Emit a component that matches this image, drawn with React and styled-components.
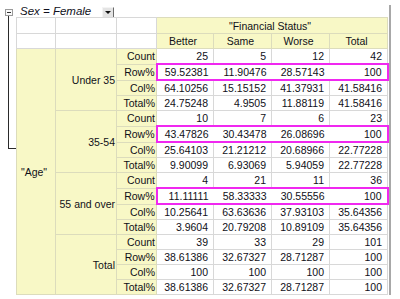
import React from "react";
import styled, { createGlobalStyle } from "styled-components";

const GlobalStyle = createGlobalStyle`
  html, body {
    margin: 0;
    padding: 0;
    background: #ffffff;
  }
  body {
    font-family: "Liberation Sans", Arial, sans-serif;
    color: #101018;
  }
`;

const Frame = styled.div`
  display: flex;
  width: 388px;
  margin-top: 5px;
  padding-right: 1px;
  border-right: 2px solid #a8a8a8;
`;

const Gutter = styled.div`
  width: 16px;
  flex: none;
  display: flex;
  flex-direction: column;
`;

const MinusBox = styled.div`
  width: 6px;
  height: 5px;
  margin: 4px 0 0 5px;
  border: 1px solid #9a9a9a;
  background: #fafafa;
  display: flex;
  align-items: center;
  justify-content: center;
  &::after {
    content: "";
    width: 4px;
    height: 1px;
    background: #333;
  }
`;

const Branch = styled.div`
  width: 7px;
  height: 132px;
  margin-left: 8px;
  border-left: 1px solid #2a2a2a;
  border-bottom: 1px solid #2a2a2a;
`;

const Main = styled.div`
  flex: 1;
  display: flex;
  flex-direction: column;
`;

const TitleBar = styled.div`
  height: 12px;
  display: flex;
  align-items: center;
  gap: 11px;
  padding-left: 4px;
`;

const Title = styled.span`
  font-size: 11.5px;
  font-style: italic;
  line-height: 12px;
  color: #101020;
  white-space: nowrap;
`;

const DropButton = styled.div`
  width: 10px;
  height: 9px;
  margin-top: 2px;
  border: 1px solid;
  border-color: #f4f4f4 #6a6a6a #6a6a6a #f4f4f4;
  background: #e4e4e4;
  display: flex;
  align-items: center;
  justify-content: center;
  &::after {
    content: "";
    border-left: 3px solid transparent;
    border-right: 3px solid transparent;
    border-top: 3px solid #111;
  }
`;

const Table = styled.table`
  border-collapse: collapse;
  table-layout: fixed;
  width: 372px;
  font-size: 10.5px;
  border-left: 1px solid #a0a0a0;
  border-bottom: 1px solid #a0a0a0;
`;

const Cell = styled.td`
  height: ${(p) => (p.$tall ? 15 : 14)}px;
  padding: 0 ${(p) => (p.$label ? 1 : 5)}px 0 1px;
  line-height: 12px;
  white-space: nowrap;
  overflow: hidden;
  text-align: ${(p) => p.$align || "right"};
  vertical-align: middle;
  background: ${(p) => (p.$yellow ? "#f8f8c6" : "#ffffff")};
  border: 1px solid ${(p) => (p.$yellow ? "#dcdcbc" : "#d8d8d8")};
  &.hl {
    border-top: 2px solid #f028f0;
    border-bottom: 2px solid #f028f0;
    border-left: hidden;
    border-right: hidden;
  }
  &.hl.first {
    border-left: 2px solid #f028f0;
  }
  &.hl.last {
    border-right: 2px solid #f028f0;
  }
`;

const groups = [
  {
    name: "Under 35",
    rows: [
      ["25", "5", "12", "42"],
      ["59.52381", "11.90476", "28.57143", "100"],
      ["64.10256", "15.15152", "41.37931", "41.58416"],
      ["24.75248", "4.9505", "11.88119", "41.58416"],
    ],
    highlight: true,
  },
  {
    name: "35-54",
    rows: [
      ["10", "7", "6", "23"],
      ["43.47826", "30.43478", "26.08696", "100"],
      ["25.64103", "21.21212", "20.68966", "22.77228"],
      ["9.90099", "6.93069", "5.94059", "22.77228"],
    ],
    highlight: true,
  },
  {
    name: "55 and over",
    rows: [
      ["4", "21", "11", "36"],
      ["11.11111", "58.33333", "30.55556", "100"],
      ["10.25641", "63.63636", "37.93103", "35.64356"],
      ["3.9604", "20.79208", "10.89109", "35.64356"],
    ],
    highlight: true,
  },
  {
    name: "Total",
    rows: [
      ["39", "33", "29", "101"],
      ["38.61386", "32.67327", "28.71287", "100"],
      ["100", "100", "100", "100"],
      ["38.61386", "32.67327", "28.71287", "100"],
    ],
    highlight: false,
  },
];

const stats = ["Count", "Row%", "Col%", "Total%"];
const columns = ["Better", "Same", "Worse", "Total"];
const widths = [39, 61, 40, 57, 58, 58, 58];

const CrossTab = () => (
  <Table>
    <colgroup>
      {widths.map((w, i) => (
        <col key={i} style={{ width: w }} />
      ))}
    </colgroup>
    <tbody>
      <tr>
        <Cell $tall />
        <Cell $tall />
        <Cell $tall />
        <Cell $tall $yellow $align="center" colSpan={4}>
          "Financial Status"
        </Cell>
      </tr>
      <tr>
        <Cell />
        <Cell />
        <Cell />
        {columns.map((c) => (
          <Cell key={c} $yellow $align="center">
            {c}
          </Cell>
        ))}
      </tr>
      {groups.map((g, gi) =>
        g.rows.map((vals, ri) => (
          <tr key={g.name + ri}>
            {gi === 0 && ri === 0 && (
              <Cell $yellow $align="center" rowSpan={16}>
                "Age"
              </Cell>
            )}
            {ri === 0 && (
              <Cell $yellow $label rowSpan={4}>
                {g.name}
              </Cell>
            )}
            <Cell $yellow $label>
              {stats[ri]}
            </Cell>
            {vals.map((v, vi) => {
              const hl = g.highlight && ri === 1;
              const cls = hl
                ? ["hl", vi === 0 ? "first" : "", vi === 3 ? "last" : ""].join(" ")
                : undefined;
              return (
                <Cell key={vi} className={cls}>
                  {v}
                </Cell>
              );
            })}
          </tr>
        ))
      )}
    </tbody>
  </Table>
);

export default function App() {
  return (
    <>
      <GlobalStyle />
      <Frame>
        <Gutter>
          <MinusBox />
          <Branch />
        </Gutter>
        <Main>
          <TitleBar>
            <Title>Sex = Female</Title>
            <DropButton />
          </TitleBar>
          <CrossTab />
        </Main>
      </Frame>
    </>
  );
}
